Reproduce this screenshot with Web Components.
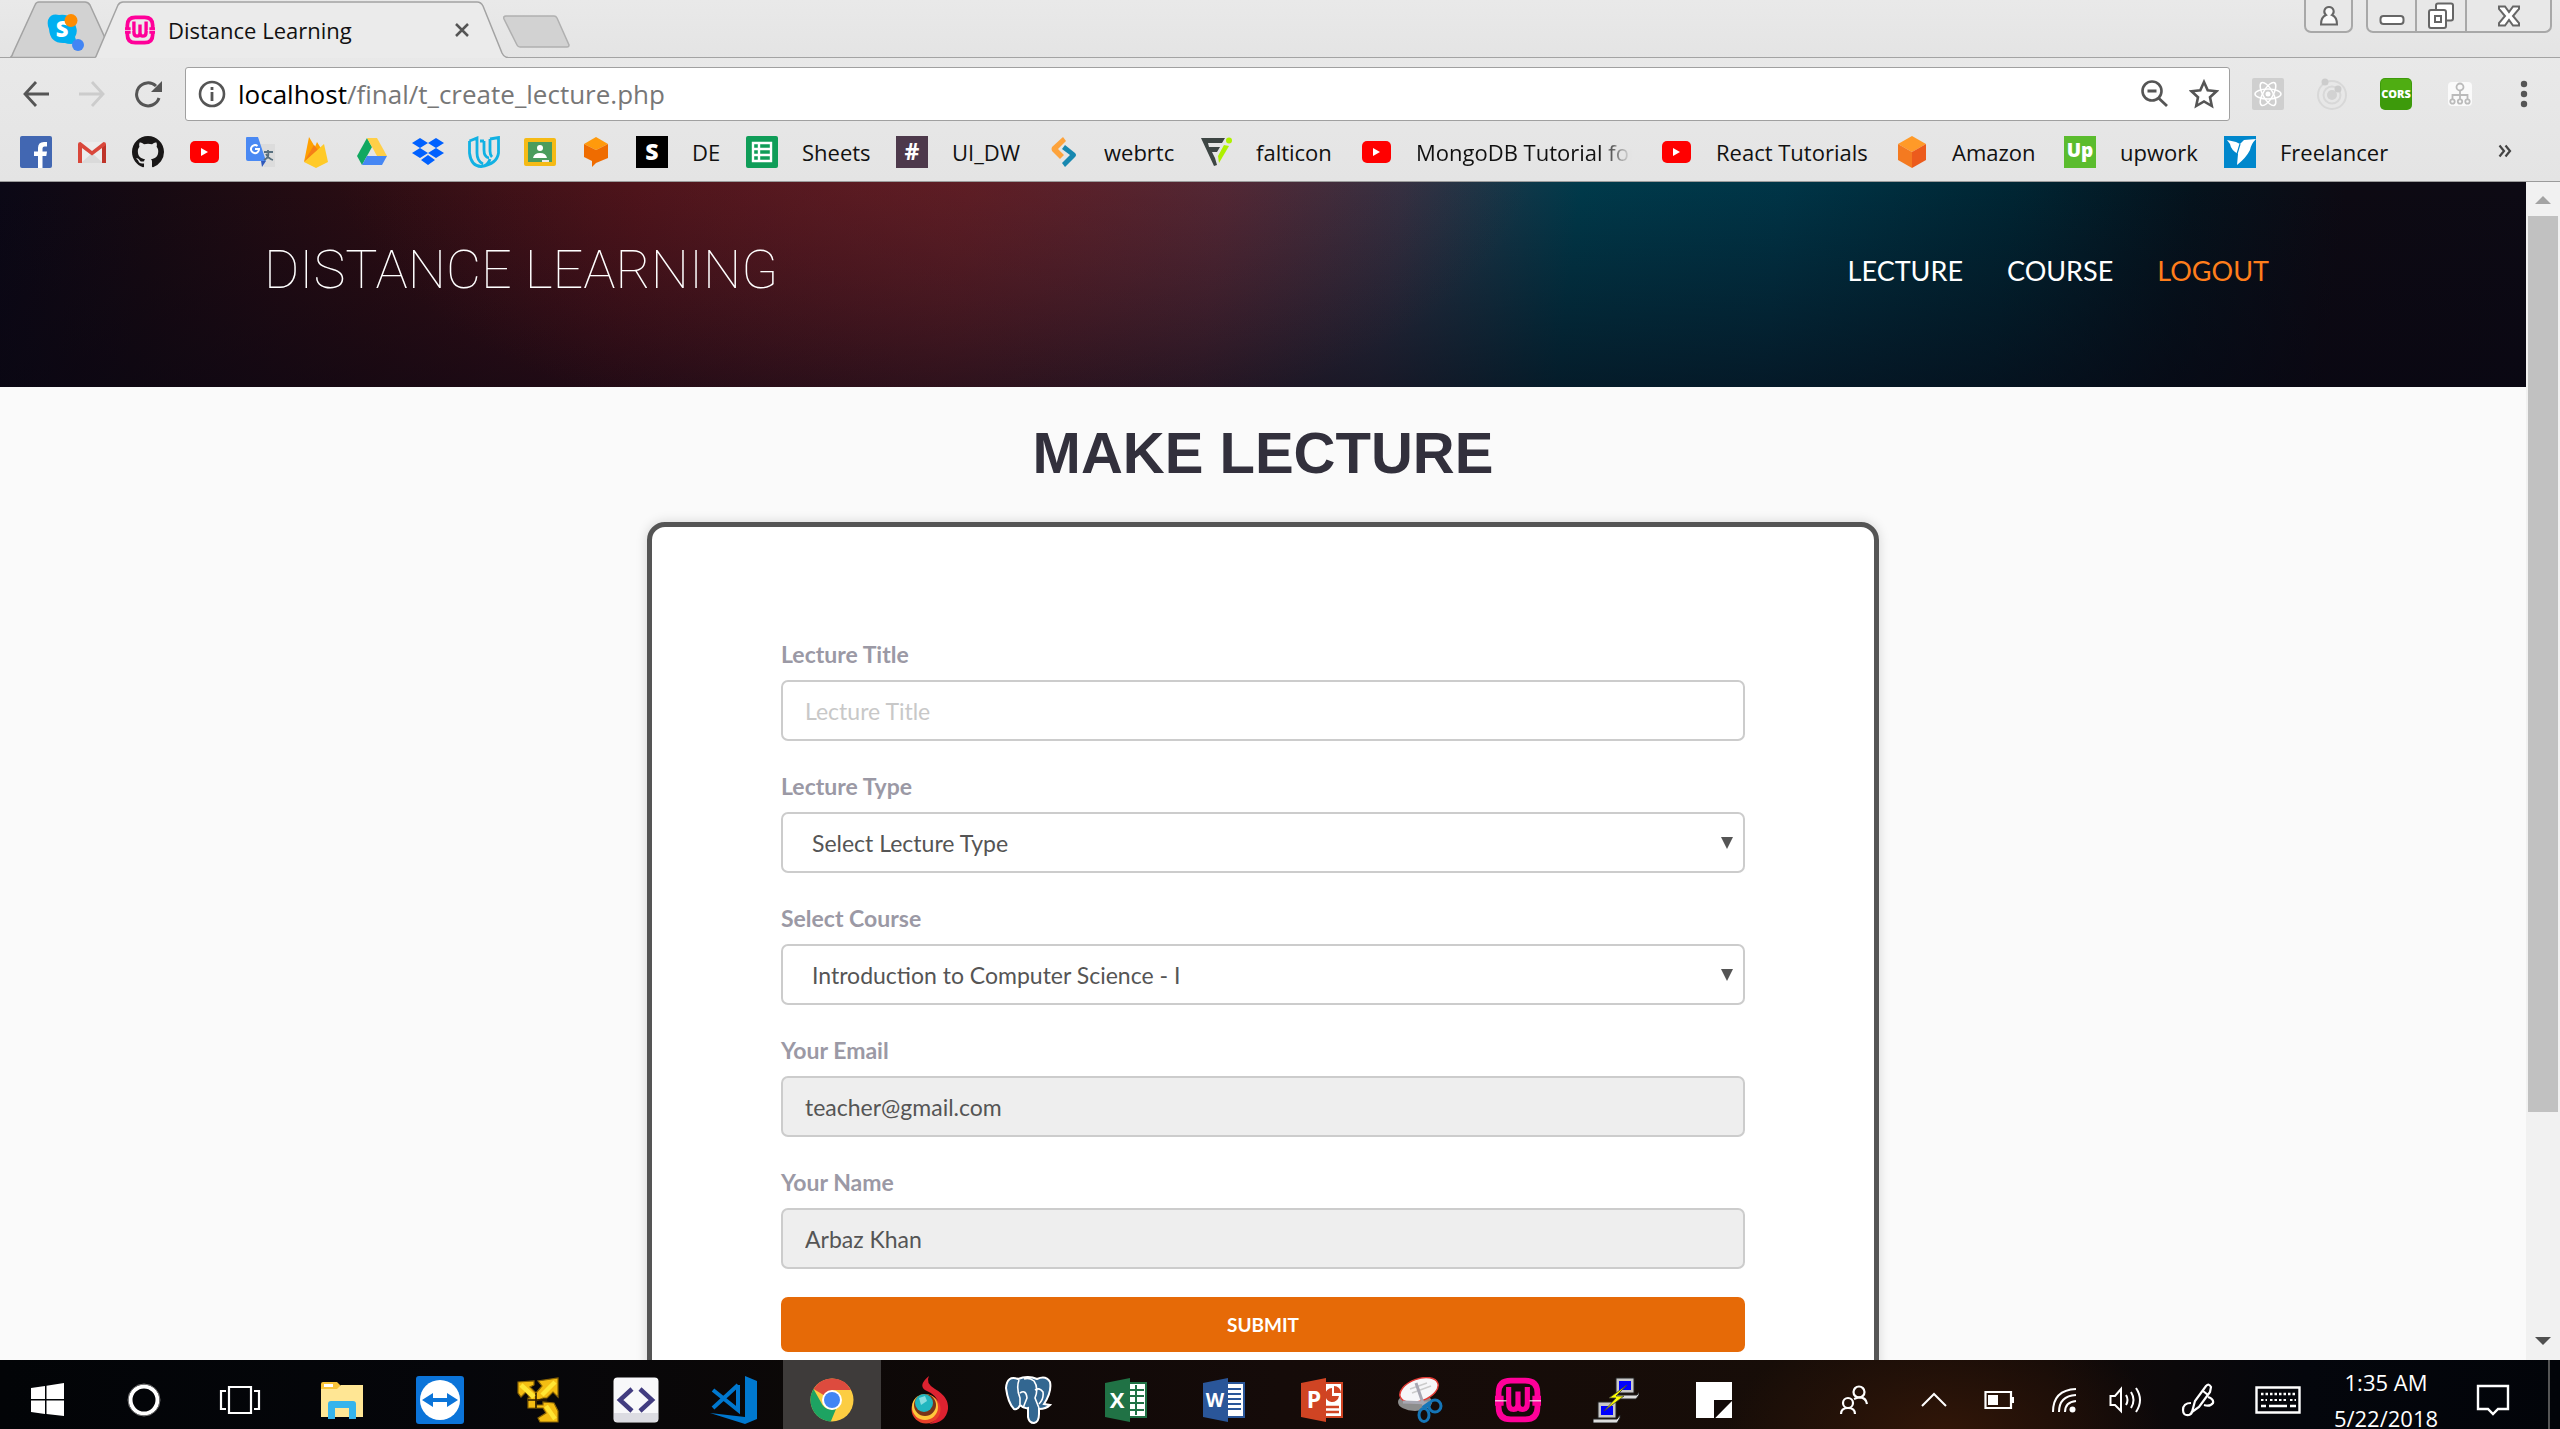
<!DOCTYPE html>
<html lang="en">
<head>
<meta charset="utf-8">
<title>Distance Learning</title>
<style>
html,body{margin:0;height:100%}
body{display:flex;flex-direction:column;overflow:hidden;font-family:"Open Sans","Noto Sans",sans-serif;font-size:22px;color:#111}
</style>
</head>
<body>
<browser-chrome></browser-chrome>
<page-viewport>
  <site-header></site-header>
  <lecture-form></lecture-form>
</page-viewport>
<task-bar></task-bar>
<script>
const ICONS = {
skype:['0 0 38 38',38,38,'<path d="M1 6Q4-1 12 1Q26-1 29 13Q31 18 28 23Q31 30 24 30Q20 30 18 29Q3 30 2 15Q0 11 1 6Z" fill="#00aff0"/><text x="15" y="23" font-family="Open Sans" font-weight="800" font-size="22" text-anchor="middle" fill="#fff">S</text><circle cx="24" cy="6.500" r="6.500" fill="#ff8c00"/><circle cx="31" cy="31" r="6" fill="#4285f4"/>'],
wamp:['0 0 32 32',32,32,'<g fill="none" stroke="#f09"><path d="M2.500 15V11Q2.500 2.500 11 2.500H21Q29.500 2.500 29.500 11V15M2.500 18V21Q2.500 29.500 11 29.500H21Q29.500 29.500 29.500 21V18M0 15H6M26 15H32M0 18H6M26 18H32" stroke-width="4"/><path d="M9.500 7V18Q9.500 22.500 13 22.500Q16 22.500 16 19V10V19Q16 22.500 19 22.500Q22.500 22.500 22.500 18V7" stroke-width="3.600"/></g><path d="M0 16.500H8M24 16.500H32" stroke="#fff" stroke-opacity=".7" stroke-width="1"/>'],
x:['0 0 14 14',14,14,'<path d="M1 1L13 13M13 1L1 13" stroke="#555" stroke-width="2.500"/>'],
user:['0 0 22 22',22,22,'<path d="M11 2a4.500 4.500 0 0 1 3 8q5 2 5 9.500H3q0-7.500 5-9.500a4.500 4.500 0 0 1 3-8z" fill="#fafafa" stroke="#666" stroke-width="2"/>'],
min:['0 0 26 24',26,24,'<rect x="1.500" y="12" width="23" height="8" rx="3" fill="#fff" stroke="#666" stroke-width="2"/>'],
restore:['0 0 28 28',28,28,'<g fill="#fff" stroke="#666" stroke-width="2"><rect x="9" y="1.500" width="17" height="17" rx="2"/><rect x="2" y="8" width="17" height="18" rx="2"/><rect x="8" y="14" width="6" height="6"/></g>'],
close:['0 0 24 22',24,22,'<path d="M2 1.500H8L12 7L16 1.500H22V4L16 11L22 18V20.500H16L12 15L8 20.500H2V18L8 11L2 4Z" fill="#fff" stroke="#666" stroke-width="2"/>'],
back:['0 0 28 28',28,28,'<path d="M14 2L3 14L14 26M3 14H27" fill="none" stroke="#555" stroke-width="2.800"/>'],
fwd:['0 0 28 28',28,28,'<path d="M14 2L25 14L14 26M1 14H25" fill="none" stroke="#ccc" stroke-width="2.800"/>'],
reload:['0 0 28 28',28,28,'<path d="M25 18A11.500 11.500 0 1 1 22 6" fill="none" stroke="#555" stroke-width="3"/><path d="M28 1V12H17Z" fill="#555"/>'],
info:['0 0 28 28',28,28,'<circle cx="14" cy="14" r="12" fill="none" stroke="#555" stroke-width="2.600"/><path d="M14 12V21M14 7V10" stroke="#555" stroke-width="2.800"/>'],
zoom:['0 0 28 28',28,28,'<circle cx="12" cy="11" r="9.500" fill="none" stroke="#555" stroke-width="2.600"/><path d="M7.500 11H16.500M18.500 18L27 26" stroke="#555" stroke-width="2.800"/>'],
star:['0 0 30 30',30,30,'<path d="M15 3L18.700 11.300L27.500 12.200L21 18.200L22.800 27L15 22.400L7.200 27L9 18.200L2.500 12.200L11.300 11.300Z" fill="none" stroke="#555" stroke-width="2.600"/>'],
react:['0 0 32 32',32,32,'<rect width="32" height="32" rx="2" fill="#cfcfcf"/><g fill="none" stroke="#fff" stroke-width="1.500"><ellipse cx="16" cy="16" rx="13" ry="5"/><ellipse cx="16" cy="16" rx="13" ry="5" transform="rotate(60 16 16)"/><ellipse cx="16" cy="16" rx="13" ry="5" transform="rotate(120 16 16)"/></g><circle cx="16" cy="16" r="2.500" fill="#fff"/>'],
ion:['0 0 32 32',32,32,'<g fill="none" stroke="#d8d8d8" stroke-width="2"><circle cx="16" cy="17" r="14"/><circle cx="16" cy="17" r="8.500"/></g><circle cx="16" cy="17" r="5" fill="#d2d2d2"/><circle cx="9" cy="4" r="3.500" fill="#ccc"/><circle cx="22" cy="11" r="3.500" fill="#ccc"/>'],
cors:['0 0 32 32',32,32,'<rect width="32" height="32" rx="5" fill="#3d9a0b"/><rect x="1" y="1" width="30" height="14" rx="4" fill="#4fad12"/><text x="16" y="20" font-family="Open Sans" font-size="11" font-weight="800" text-anchor="middle" fill="#fff">CORS</text>'],
tree:['0 0 24 24',24,24,'<rect width="24" height="24" rx="4" fill="#fafafa"/><g fill="none" stroke="#bbb" stroke-width="1.800"><circle cx="12" cy="5" r="3.500"/><path d="M12 8V17M4.500 17V13H19.500V17"/><circle cx="4.500" cy="19.500" r="2.200"/><circle cx="12" cy="19.500" r="2.200"/><circle cx="19.500" cy="19.500" r="2.200"/></g>'],
menu:['0 0 8 28',8,28,'<g fill="#555"><circle cx="4" cy="4" r="3.200"/><circle cx="4" cy="14" r="3.200"/><circle cx="4" cy="24" r="3.200"/></g>'],
facebook:['0 0 32 32',32,32,'<rect width="32" height="32" rx="2" fill="#4267b2"/><path d="M18 32V20H14V15.500H18V12Q18 6 24 6H27V10.500H24.500Q22.500 10.500 22.500 12.500V15.500H27L26.300 20H22.500V32Z" fill="#fff"/>'],
gmail:['0 0 32 32',32,32,'<path d="M3 6H29V27H3Z" fill="#ececec"/><path d="M5 27L16 17L27 27Z" fill="#dadada"/><path d="M2 8Q2 6 4.500 6L16 15L27.500 6Q30 6 30 8V27H26V12L16 19.500L6 12V27H2Z" fill="#d9473b"/><path d="M26 12L30 9V27H26Z" fill="#bf3429"/>'],
github:['0 0 16 16',32,32,'<path fill="#191717" d="M8 0C3.580 0 0 3.580 0 8c0 3.540 2.290 6.530 5.470 7.590.4.070.55-.17.55-.38 0-.19-.01-.82-.01-1.490-2.010.37-2.530-.49-2.690-.94-.09-.23-.48-.94-.82-1.130-.28-.15-.68-.52-.01-.53.63-.01 1.080.58 1.230.82.72 1.210 1.870.87 2.330.66.070-.52.28-.87.510-1.070-1.780-.2-3.640-.89-3.640-3.950 0-.87.310-1.590.82-2.150-.08-.2-.36-1.020.08-2.120 0 0 .67-.21 2.200.82a7.600 7.600 0 0 1 4 0c1.530-1.040 2.200-.82 2.200-.82.44 1.100.16 1.920.08 2.120.51.56.82 1.270.82 2.150 0 3.070-1.870 3.750-3.650 3.950.29.25.54.73.54 1.480 0 1.070-.01 1.930-.01 2.200 0 .21.15.46.55.38A8.010 8.010 0 0 0 16 8c0-4.420-3.580-8-8-8z"/>'],
youtube:['0 0 32 32',32,32,'<rect x="2" y="5" width="29" height="22" rx="5" fill="#f00"/><path d="M13 12L20 16L13 20Z" fill="#fff"/>'],
translate:['0 0 32 32',32,32,'<path d="M13 8H31V31H20Z" fill="#dcdcdc"/><path d="M3 1H14L22 25H4Q2 25 2 23V2Q2 1 3 1Z" fill="#4a89f3"/><path d="M17 25H22L18 31Z" fill="#3059bb"/><path d="M13.500 10A4 4 0 1 0 15 13H11" fill="none" stroke="#fff" stroke-width="2"/><path d="M20 16H29M24 14V16Q26 21 20 24M22 18Q25 23 29 24" fill="none" stroke="#58707f" stroke-width="1.800"/>'],
firebase:['0 0 32 32',32,32,'<path d="M4 26L9 1L15 11L17 6L22 14L4 26Z" fill="#ffa000"/><path d="M4 26L14 9L18 14Z" fill="#f57f17"/><path d="M4 26L24 8L28 26L16 32Z" fill="#ffca28"/>'],
drive:['0 0 32 32',32,32,'<path d="M11 2L1 20L6 29L16 11Z" fill="#11a861"/><path d="M11 2H21L31 20H21Z" fill="#ffcf48"/><path d="M11 20H31L26 29H6Z" fill="#4687f4"/>'],
dropbox:['0 0 32 32',32,32,'<g fill="#0061ff"><path d="M8 2L16 7L8 12L0 7ZM24 2L32 7L24 12L16 7ZM8 12L16 17L8 22L0 17ZM24 12L32 17L24 22L16 17ZM16 19L23 24L16 29L9 24Z"/></g>'],
udacity:['0 0 32 32',32,32,'<path d="M1.500 5L9 2V17Q9 25 15 28M1.500 5V17Q3 30 13 30.500Q20 30 22 23M16 5V14Q16 21 21 22M12 5H16M22 3V15Q22 19 24 21M22 3L30.500 1.500V17Q29 28 13 30.500" fill="none" stroke="#12b1e3" stroke-width="2.800"/>'],
classroom:['0 0 32 32',32,32,'<rect y="2" width="32" height="28" rx="2" fill="#f5ba15"/><rect x="4" y="6" width="24" height="20" fill="#4a9c5c"/><circle cx="16" cy="12" r="3" fill="#fff"/><path d="M9 22Q10 17 16 17Q22 17 23 22Z" fill="#fff"/><path d="M18 26H25V24H18Z" fill="#e8e8e8"/>'],
cube1:['0 0 32 32',32,32,'<path d="M16 1L28 8L16 14L4 8Z" fill="#ff9a0c"/><path d="M4 8L16 14L28 8V22L16 27L12 31V25L4 21Z" fill="#ef6c00"/>'],
sblack:['0 0 32 32',32,32,'<rect width="32" height="32" fill="#000"/><text x="16" y="24" font-family="Open Sans" font-size="23" font-weight="800" text-anchor="middle" fill="#fff">S</text>'],
sheets:['0 0 32 32',32,32,'<rect width="32" height="32" rx="2" fill="#0f9d58"/><path d="M7 7H25V25H7ZM7 13H25M7 19H25M13 7V25" fill="none" stroke="#fff" stroke-width="2.400"/>'],
hash:['0 0 32 32',32,32,'<rect width="32" height="32" fill="#4d394b"/><text x="16" y="24" font-family="Open Sans" font-size="23" font-weight="700" text-anchor="middle" fill="#fff">#</text>'],
webrtc:['0 0 32 32',32,32,'<path d="M15 1L18 5L10 13L16 19L12 23L4 15Q3 13 4 11Z" fill="#fda33c"/><path d="M17 9L27 17Q29 19 27 21L17 31L14 27L22 19L14 13Z" fill="#1788b0"/>'],
flat:['0 0 32 32',32,32,'<path d="M1 2H25L22 7H8L9 11H20L17 16H12L15 22L17 29L14 30Z" fill="#3d4543"/><path d="M29 10L19 27L18 20L24 9Z" fill="#aef000"/><circle cx="29" cy="4.500" r="3" fill="#aef000"/>'],
cube2:['0 0 32 32',32,32,'<path d="M16 0L30 8L16 16L2 8Z" fill="#ff9a28"/><path d="M2 8L16 16V32L2 24Z" fill="#f47a20"/><path d="M30 8L16 16V32L30 24Z" fill="#ec5b1c"/>'],
up:['0 0 32 32',32,32,'<rect width="32" height="32" fill="#5bbc2e"/><text x="16" y="21" font-family="Open Sans" font-size="19" font-weight="800" text-anchor="middle" fill="#fff">Up</text>'],
freelancer:['0 0 32 32',32,32,'<rect width="32" height="32" fill="#0087cc"/><path d="M3 4L12 6L16 8L20 4L32 3Q27 8 26 14Q22 22 13 29L14 18Q7 14 6 8Z" fill="#fff"/><path d="M16 8L13 18" stroke="#0087cc" stroke-width="1.200"/>'],
chev2:['0 0 14 14',14,14,'<path d="M1.500 1.500L6 7L1.500 12.500M7.500 1.500L12 7L7.500 12.500" fill="none" stroke="#444" stroke-width="2.200"/>'],
start:['0 0 34 34',34,34,'<path d="M0 5L14 3V16H0ZM15.500 2.800L33 0V16H15.500ZM0 17.500H14V31L0 29ZM15.500 17.500H33V33L15.500 31Z" fill="#fff"/>'],
cortana:['0 0 34 34',34,34,'<circle cx="17" cy="17" r="13.500" fill="none" stroke="#fff" stroke-width="4"/><circle cx="17" cy="17" r="16" fill="none" stroke="#777" stroke-width="1"/>'],
taskview:['0 0 42 30',42,30,'<path d="M10 2H32V28H10ZM7 6H2V24H7M35 6H40V24H35" fill="none" stroke="#fff" stroke-width="2.200"/>'],
explorer:['0 0 44 38',44,38,'<path d="M1 3Q1 1 3 1H17L21 5V10H1Z" fill="#f8c43a"/><rect x="4" y="3" width="9" height="3" fill="#fff"/><path d="M1 8H17L21 4H43V36H1Z" fill="#ffe694"/><path d="M8 38V23Q8 20 11 20H33Q36 20 36 23V38H29V27H15V38Z" fill="#35b4ec"/>'],
teamviewer:['0 0 48 48',48,48,'<rect width="48" height="48" rx="3" fill="#0b74d9"/><circle cx="24" cy="24" r="20" fill="#fff"/><path d="M6 24L17 17V22H31V17L42 24L31 31V26H17V31Z" fill="#0b74d9"/>'],
vmware:['0 0 44 46',44,46,'<path d="M2 5L18 4V8L14 10L20 16L26 9L22 4L42 1V20L37 15L31 21H27L20 24V28H27V25L38 26L42 34V45H24L22 41L30 36L27 31H12V21H14L10 15L5 20L2 16Z" fill="#f4bd12" stroke="#8a6404" stroke-width="1.200"/><path d="M12 23H31M20 16V31" stroke="#2a1a00" stroke-width="1.600"/><path d="M5 8L18 20M39 5L26 18M30 29L39 42" stroke="#ffe634" stroke-width="4.500"/>'],
brackets:['0 0 46 46',46,46,'<rect x=".5" y=".5" width="45" height="45" rx="4" fill="#f8f8fa"/><path d="M1 36H45V42Q45 45 42 45H4Q1 45 1 42Z" fill="#dcdce2"/><path d="M19 12L7 23L19 34M27 12L39 23L27 34" fill="none" stroke="#423c80" stroke-width="4.500"/>'],
vscode:['0 0 48 48',48,48,'<path d="M35 0L47 5V43L35 48L0 37L35 41Z" fill="#0078cf"/><path d="M28 9V34L3 14M28 9L3 32" fill="none" stroke="#0078cf" stroke-width="4"/>'],
chrome:['0 0 44 44',44,44,'<circle cx="22" cy="22" r="21.500" fill="#fccd42"/><path d="M22 22L3.500 11A21.500 21.500 0 0 1 41 12H22Z" fill="#dd4b3e"/><path d="M22 22L21 43.500A21.500 21.500 0 0 1 3.500 11L12.500 27Q17 33 26 31L21 43Z" fill="#1da362"/><circle cx="22" cy="22" r="10" fill="#fff"/><circle cx="22" cy="22" r="8" fill="#4285f4"/>'],
torch:['0 0 38 48',38,48,'<path d="M18 0Q14 7 24 13Q38 21 37 33Q35 47 18 48Q30 42 28 28Q26 19 14 14Q7 9 18 0Z" fill="#dd2230"/><circle cx="15" cy="33" r="14.500" fill="#e8402a"/><circle cx="14" cy="31" r="13" fill="#ffc83b"/><circle cx="14" cy="29" r="11" fill="#7a3518"/><circle cx="13" cy="27" r="9" fill="#21b6bf"/><path d="M8 22L14 20L16 25L10 29Z" fill="#88dde0"/>'],
postgres:['0 0 48 48',48,48,'<path d="M14 3Q3-1 2 12Q4 27 10 33Q14 34 16 29Q20 33 24 32V41Q25 47 30 47Q35 46 35 38V33Q42 33 46 29L40 28Q48 16 46 6Q42-1 33 3Q24-1 14 3Z" fill="#336791" stroke="#fff" stroke-width="2"/><path d="M15 4Q12 12 16 22V28M20 3Q25 1 30 5Q35 12 31 22L35 32M16 17Q22 13 23 22L19 32M31 14Q36 11 39 16Q40 23 35 28" fill="none" stroke="#fff" stroke-width="1.600"/>'],
excel:['0 0 42 44',42,44,'<path d="M24 5H41V39H24Z" fill="#fff" stroke="#207245" stroke-width="2"/><path d="M24 12H39M24 18H39M24 25H39M24 32H39M31 7V37" stroke="#207245" stroke-width="2"/><path d="M0 5L25 0V44L0 39Z" fill="#207245"/><text x="12" y="30" font-family="Open Sans" font-size="22" font-weight="700" text-anchor="middle" fill="#fff">X</text>'],
word:['0 0 42 44',42,44,'<path d="M24 5H41V39H24Z" fill="#fff" stroke="#2a5699" stroke-width="2"/><path d="M24 11H38M24 16H38M24 21H38M24 26H38M24 31H38" stroke="#2a5699" stroke-width="2"/><path d="M0 5L25 0V44L0 39Z" fill="#2a5699"/><text x="12" y="29" font-family="Open Sans" font-size="19" font-weight="700" text-anchor="middle" fill="#fff">W</text>'],
ppt:['0 0 42 44',42,44,'<path d="M24 5H41V39H24Z" fill="#fff" stroke="#d04423" stroke-width="2"/><path d="M24 29H38M24 34H38" stroke="#d04423" stroke-width="2.500"/><path d="M31 10A7 7 0 1 0 38 18H31Z" fill="#d04423"/><path d="M33 8A7 7 0 0 1 40 15H33Z" fill="#d04423"/><path d="M0 5L25 0V44L0 39Z" fill="#d04423"/><text x="13" y="30" font-family="Open Sans" font-size="23" font-weight="700" text-anchor="middle" fill="#fff">P</text>'],
snip:['0 0 46 46',46,46,'<ellipse cx="18" cy="25" rx="17" ry="9" fill="#8d8d8d"/><ellipse cx="22" cy="13" rx="20" ry="11" transform="rotate(-20 22 13)" fill="#f6f6f8" stroke="#e23c36" stroke-width="1.500"/><path d="M13 12L30 6M15 16L34 9" stroke="#ccc" stroke-width="1.500"/><path d="M19 6L28 32M6 25L33 26" stroke="#a7a7b2" stroke-width="3"/><circle cx="38" cy="29" r="6" fill="none" stroke="#1576b8" stroke-width="3"/><ellipse cx="27" cy="38" rx="5" ry="6.500" fill="none" stroke="#1576b8" stroke-width="3"/><path d="M26 31L33 26" stroke="#1576b8" stroke-width="4"/>'],
putty:['0 0 46 46',46,46,'<g stroke="#222" stroke-width="1"><path d="M22 18H44L46 15V18L43 22H22ZM0 42H24L27 38V41L24 46H0Z" fill="#ddd"/><path d="M23 1H41V16H23ZM5 25H23V41H5Z" fill="#c8c8c8"/></g><path d="M26 4H38V13H26ZM8 29H20V38H8Z" fill="#00f"/><path d="M34 8L16 21H23L11 34L31 19H23Z" fill="#ff0" stroke="#443" stroke-width=".8"/>'],
sticky:['0 0 36 36',36,36,'<path d="M0 0H36V18H18V36H0ZM36 19V36H19Z" fill="#fff"/><path d="M18 18H36L19 36H18Z" fill="#120a08"/>'],
people:['0 0 30 30',30,30,'<g fill="none" stroke="#fff" stroke-width="2.200"><circle cx="20" cy="7" r="5.500"/><circle cx="9" cy="18" r="5"/><path d="M15 14L19 12.500Q27 12 28 19M2 29Q2 23 9 23Q16 23 16 29"/></g>'],
chev:['0 0 28 16',28,16,'<path d="M2 14L14 2L26 14" fill="none" stroke="#fff" stroke-width="2"/>'],
battery:['0 0 30 20',30,20,'<path d="M1.500 2H27V18H1.500ZM29 7V13" fill="none" stroke="#fff" stroke-width="2.200"/><path d="M4 5H14V15H4Z" fill="#fff"/>'],
wifi:['0 0 26 26',26,26,'<g fill="none" stroke="#fff" stroke-width="2"><path d="M2 25Q2 3 25 2M8 25Q8 9 25 8M14 25Q14 15 25 14"/></g><circle cx="21.500" cy="22.500" r="3" fill="#fff"/>'],
volume:['0 0 34 28',34,28,'<path d="M1.500 10H6L12 3V25L6 19H1.500ZM17 9Q20 14 17 19M22 6Q27 14 22 22M27 2Q35 14 27 26" fill="none" stroke="#fff" stroke-width="2"/>'],
pen:['0 0 34 34',34,34,'<path d="M11 29L14 18L25 3Q28 0 30 4L29 9L18 24ZM22 8L27 12" fill="none" stroke="#fff" stroke-width="2.200"/><path d="M10 20Q2 20 2 27Q2 33 8 32Q11 31 11 28M27 14Q33 16 32 20Q29 24 23 22" fill="none" stroke="#fff" stroke-width="2.200"/>'],
keyboard:['0 0 46 28',46,28,'<path d="M1.500 1.500H44.500V26.500H1.500Z" fill="none" stroke="#fff" stroke-width="2.400"/><path d="M6 8H41" stroke="#fff" stroke-width="2.400" stroke-dasharray="2.500 2"/><path d="M6 14H12M15 14H33M35 14H41" stroke="#fff" stroke-width="2.200" stroke-dasharray="2.500 2"/><path d="M6 20H11M14 20H32M35 20H41" stroke="#fff" stroke-width="2.400"/>'],
notif:['0 0 34 32',34,32,'<path d="M2 2H32V25H22L17 30L12 25H2Z" fill="none" stroke="#fff" stroke-width="2.400"/>'],
down:['0 0 12 12',12,12,'<path d="M0 0H12L6 12Z" fill="#555"/>'],
sbup:['0 0 16 8',16,8,'<path d="M0 8L8 0L16 8Z" fill="#a3a3a3"/>'],
sbdown:['0 0 16 8',16,8,'<path d="M0 0L8 8L16 0Z" fill="#505050"/>']
};
const define = (name, render) => customElements.define(name, class extends HTMLElement {
  connectedCallback() {
    if (this.shadowRoot) return;
    this.attachShadow({mode:'open'}).innerHTML = render(this);
  }
});
const icon = (name, size) => `<ui-icon name="${name}"${size ? ` size="${size}"` : ''}></ui-icon>`;

define('ui-icon', el => {
  const [box, w, h, body] = ICONS[el.getAttribute('name')];
  const s = el.getAttribute('size');
  return `<style>:host{display:inline-flex;flex:none}svg{display:block}</style>
  <svg viewBox="${box}" width="${s || w}" height="${s || h}" aria-hidden="true">${body}</svg>`;
});

define('tab-strip', () => `<style>
:host{display:flex;height:58px;background:linear-gradient(#e9e9e9,#e4e4e4);box-shadow:inset 0 -1px #a3a3a3;padding-left:10px}
.tab{position:relative;display:flex;align-items:center;height:58px;box-sizing:border-box}
.tab>*{position:relative}
.shape{position:absolute;left:0;top:0;display:block}
.pinned{width:96px;padding:8px 0 0 37px}
.active{width:413px;padding:2px 39px 0 30px;margin-left:-11px}
.title{flex:1;margin-left:13px;white-space:nowrap}
button{border:0;background:none;padding:0;margin:0;display:flex;align-items:center;justify-content:center}
.new{width:67px;height:34px;margin:15px 0 0 -5px}
.win{display:flex;margin-left:auto;padding-right:8px}
.win button{height:33px;border:2px solid #a8a8a8;border-top:0;background:#e8e8e8;box-sizing:border-box}
.user{width:49px;border-radius:0 0 7px 7px;margin-right:13px}
.a{width:51px;border-radius:0 0 0 7px}.win .b{width:50px;border-left:0}.win .c{width:85px;border-left:0;border-radius:0 0 7px 0}
</style>
<div class="tab pinned"><svg class="shape" width="96" height="58"><path d="M0 57.500Q2 57 3 53L25 5Q26 2 29 2H75Q78 2 80 5L95 38V57.500Z" fill="#d2d2d2" stroke="#a3a3a3" stroke-width="1.500"/></svg>${icon('skype')}</div>
<div class="tab active"><svg class="shape" width="413" height="58"><path d="M0 57.500Q1 57 2 54L23 5Q25 2 28 2H382Q386 2 388 6L407 53Q409 57 413 57.500V59H0Z" fill="#ebebeb"/><path d="M0 57.500Q1 57 2 54L23 5Q25 2 28 2H382Q386 2 388 6L407 53Q409 57.500 413 57.500" fill="none" stroke="#a3a3a3" stroke-width="1.500"/></svg>${icon('wamp',30)}<span class="title">Distance Learning</span><button aria-label="Close tab">${icon('x')}</button></div>
<button class="new" aria-label="New tab"><svg width="67" height="34"><path d="M3 1H51Q53 1 54 3L66 30Q66 32 64 32H17Q15 32 14 30L1 4Q0 1 3 1Z" fill="#d2d2d2" stroke="#b0b0b0" stroke-width="1.500"/></svg></button>
<div class="win"><button class="user" aria-label="Profile">${icon('user')}</button><button class="a" aria-label="Minimize">${icon('min')}</button><button class="b" aria-label="Restore">${icon('restore')}</button><button class="c" aria-label="Close">${icon('close')}</button></div>`);

define('address-bar', () => `<style>
:host{display:flex;align-items:center;height:72px;padding:0 4px 0 8px}
button{width:56px;height:56px;padding:0;border:0;background:none;display:flex;align-items:center;justify-content:center}
.ext button{width:64px}.ext{display:flex;margin-left:6px}
.box{flex:1;display:flex;align-items:center;height:54px;box-sizing:border-box;border:1px solid #a0a0a0;border-radius:3px;background:#fff;margin-left:9px;padding:0 10px 0 12px}
.url{flex:1;margin-left:12px;font-size:26px;color:#777;white-space:nowrap}
.url b{font-weight:400;color:#000}
.box button{width:30px;margin-left:20px}
</style>
<button aria-label="Back">${icon('back')}</button><button aria-label="Forward">${icon('fwd')}</button><button aria-label="Reload">${icon('reload')}</button>
<div class="box">${icon('info')}<span class="url"><b>localhost</b>/final/t_create_lecture.php</span><button aria-label="Zoom">${icon('zoom')}</button><button aria-label="Bookmark">${icon('star')}</button></div>
<div class="ext">${['react','ion','cors','tree','menu'].map(n=>`<button aria-label="${n}">${icon(n)}</button>`).join('')}</div>`);

const BOOKMARKS = [['facebook'],['gmail'],['github'],['youtube'],['translate'],['firebase'],['drive'],['dropbox'],['udacity'],['classroom'],['cube1'],['sblack','DE',30],['sheets','Sheets',70],['hash','UI_DW',72],['webrtc','webrtc',72],['flat','falticon',80],['youtube','MongoDB Tutorial for',220],['youtube','React Tutorials',156],['cube2','Amazon',88],['up','upwork',80],['freelancer','Freelancer',110]];
define('bookmark-bar', () => `<style>
:host{display:flex;align-items:center;gap:24px;height:44px;padding:0 48px 7px 20px}
a{display:flex;align-items:center;gap:24px;color:#111;text-decoration:none}
.t{width:var(--w);white-space:nowrap;overflow:hidden;line-height:28px}
.fade{-webkit-mask-image:linear-gradient(90deg,#000 84%,transparent 98%);mask-image:linear-gradient(90deg,#000 84%,transparent 98%)}
button{margin-left:auto;border:0;background:none;padding:0}
</style>${BOOKMARKS.map(([i,t,w])=>`<a href="#" aria-label="${t||i}">${icon(i)}${t?`<span class="t${w===220?' fade':''}" style="--w:${w}px">${t}</span>`:''}</a>`).join('')}<button aria-label="More bookmarks">${icon('chev2')}</button>`);

define('browser-chrome', () => `<style>
:host{display:block;flex:none;background:linear-gradient(#ebebeb,#e4e4e4);border-bottom:1px solid #9b9b9b}
</style><tab-strip></tab-strip><address-bar></address-bar><bookmark-bar></bookmark-bar>`);

define('page-viewport', () => `<style>
:host{display:flex;flex:1;min-height:0;background:#fafafa}
.page{flex:1;overflow:hidden;font-family:Lato,"Open Sans",sans-serif}
.bar{width:34px;box-sizing:border-box;background:#f1f1f1;display:flex;flex-direction:column;align-items:center;padding:14px 0 15px}
.thumb{width:30px;flex:none;height:78%;margin-top:12px;background:#c1c1c1}
.end{margin-top:auto;display:flex}
</style><div class="page"><slot></slot></div>
<div class="bar">${icon('sbup')}<div class="thumb"></div><div class="end">${icon('sbdown')}</div></div>`);

define('site-header', () => `<style>
:host{display:block;padding:56px 0 85px;background:
radial-gradient(ellipse 24% 150% at 37% -20%,rgba(110,26,30,.5),transparent),
linear-gradient(rgba(8,6,18,0),rgba(8,6,18,.58)),
linear-gradient(97deg,#0b0816 0%,#170a12 6%,#2c0d13 15%,#45121a 25%,#52202a 38%,#4a2c3c 48%,#2f3346 55%,#003a4b 62%,#003547 70%,#002634 79%,#05131d 86%,#0d0a13 92%,#0d0a14)}
.row{display:flex;align-items:center;justify-content:space-between;height:64px;box-sizing:border-box;max-width:2012px;margin:0 auto;padding-left:7px}
.logo{font:100 54px/64px Roboto,sans-serif;color:#fff;text-decoration:none}
nav{display:flex;gap:44px}
nav a{font-size:27px;color:#fff;text-decoration:none}
nav .out{color:#ff7e1b}
</style><div class="row"><a class="logo" href="#">DISTANCE LEARNING</a><nav><a href="#">LECTURE</a><a href="#">COURSE</a><a class="out" href="#">LOGOUT</a></nav></div>`);

define('form-field', el => {
  const kind = el.getAttribute('kind'), val = el.getAttribute('value') || '';
  const control = kind === 'select'
    ? `<select id="c"><option>${val}</option></select>${icon('down')}`
    : kind === 'readonly' ? `<input id="c" value="${val}" readonly>` : `<input id="c" placeholder="${el.getAttribute('placeholder')}">`;
  return `<style>
:host{display:block}
label{display:block;font-size:23px;line-height:30px;font-weight:700;color:#9b99a5;margin-bottom:11px}
.wrap{display:grid;align-items:center}
.wrap>*{grid-area:1/1}
input,select{appearance:none;width:100%;height:61px;box-sizing:border-box;border:2px solid #ccc;border-radius:7px;background:#fff;padding:0 22px;font-family:inherit;font-size:23px;color:#555;outline:0}
select{padding-left:29px}
input[readonly]{background:#eee}
input::placeholder{color:#c8c8c8;opacity:1}
ui-icon{justify-self:end;margin-right:12px;pointer-events:none}
</style><label for="c">${el.getAttribute('label')}</label><div class="wrap">${control}</div>`;
});

define('lecture-form', () => `<style>
:host{display:flex;flex-direction:column;align-items:center}
h1{margin:30px 0 33px;font:700 58px/72px "Liberation Sans",sans-serif;color:#32303c}
form{width:100%;max-width:1232px;box-sizing:border-box;border:5px solid #555;border-radius:18px;background:#fff;padding:112px 129px;box-shadow:0 0 12px rgba(0,0,0,.15);display:flex;flex-direction:column}
form-field{margin-bottom:30px}
form-field:last-of-type{margin-bottom:28px}
button{height:55px;border:0;border-radius:7px;background:#e66a07;color:#fff;font:700 19px Lato,sans-serif;padding:0}
</style><h1>MAKE LECTURE</h1>
<form>
<form-field label="Lecture Title" kind="text" placeholder="Lecture Title"></form-field>
<form-field label="Lecture Type" kind="select" value="Select Lecture Type"></form-field>
<form-field label="Select Course" kind="select" value="Introduction to Computer Science - I"></form-field>
<form-field label="Your Email" kind="readonly" value="teacher@gmail.com"></form-field>
<form-field label="Your Name" kind="readonly" value="Arbaz Khan"></form-field>
<button type="button">SUBMIT</button>
</form>`);

const cell = (n, w, cls='', s) => `<button class="${cls}" style="--w:${w}px" aria-label="${n}">${icon(n, s)}</button>`;
define('task-bar', () => `<style>
:host{display:block;flex:none;height:69px;overflow:hidden;color:#fff;background:
radial-gradient(ellipse 220px 120px at 76% 110%,rgba(70,30,8,.6),transparent),
linear-gradient(90deg,#020407,#05060a 18%,#0c0807 32%,#150b09 50%,#170d08 70%,#120a08 80%,#04060c 90%,#020409)}
.row{display:flex;height:80px}
button{width:var(--w);flex:none;height:80px;padding:0;border:0;background:none;display:flex;align-items:center;justify-content:center}
.apps{display:flex;margin-left:5px}
.on{background:#3e3b3a}
.tray{display:flex;margin-left:auto;padding-right:10px}
.clock{width:156px;text-align:center;line-height:36px;padding-top:4px}
.peek{width:28px;box-sizing:border-box;border-right:2px solid #555;height:80px}
</style><div class="row">
${cell('start',96)}${cell('cortana',96)}${cell('taskview',96)}
<div class="apps">${['explorer','teamviewer','vmware','brackets','vscode','chrome','torch','postgres','excel','word','ppt','snip','wamp','putty','sticky'].map(n=>cell(n,98,n==='chrome'?'on':'',n==='wamp'?46:0)).join('')}</div>
<div class="tray">${cell('people',80)}${cell('chev',80)}${cell('battery',50)}${cell('wifi',80)}${cell('volume',44)}${cell('pen',100)}${cell('keyboard',60)}<div class="clock"><div>1:35 AM</div><div>5/22/2018</div></div>${cell('notif',58)}<div class="peek"></div></div>
</div>`);
</script>
</body>
</html>
